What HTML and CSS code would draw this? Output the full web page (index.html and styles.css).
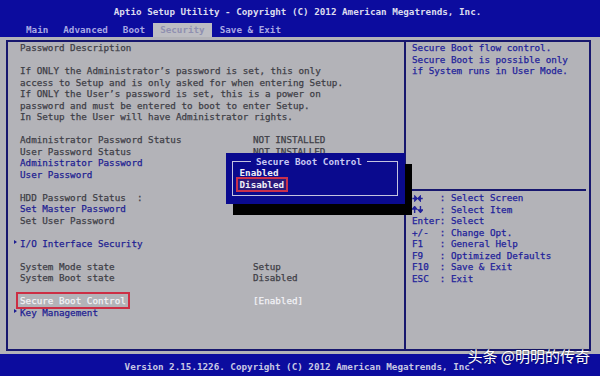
FILE: index.html
```html
<!DOCTYPE html>
<html>
<head>
<meta charset="utf-8">
<link rel="stylesheet" href="styles.css">
</head>
<body>
<div class="screen">
  <header class="top">
    <div class="title">Aptio Setup Utility - Copyright (C) 2012 American Megatrends, Inc.</div>
    <nav class="tabs">
      <span class="tab">Main</span>
      <span class="tab">Advanced</span>
      <span class="tab">Boot</span>
      <span class="tab active">Security</span>
      <span class="tab">Save &amp; Exit</span>
    </nav>
  </header>
  <main class="frame">
    <section class="left">
      <div class="row t">Password Description</div>
      <div class="row"></div>
      <div class="row t">If ONLY the Administrator’s password is set, this only</div>
      <div class="row t">access to Setup and is only asked for when entering Setup.</div>
      <div class="row t">If ONLY the User’s password is set, this is a power on</div>
      <div class="row t">password and must be entered to boot to enter Setup.</div>
      <div class="row t">In Setup the User will have Administrator rights.</div>
      <div class="row"></div>
      <div class="row kv t"><span>Administrator Password Status</span><span>NOT INSTALLED</span></div>
      <div class="row kv t"><span>User Password Status</span><span>NOT INSTALLED</span></div>
      <div class="row b">Administrator Password</div>
      <div class="row b">User Password</div>
      <div class="row"></div>
      <div class="row t">HDD Password Status  :</div>
      <div class="row b">Set Master Password</div>
      <div class="row t">Set User Password</div>
      <div class="row"></div>
      <div class="row b"><span class="mark"></span>I/O Interface Security</div>
      <div class="row"></div>
      <div class="row kv t"><span>System Mode state</span><span>Setup</span></div>
      <div class="row kv t"><span>System Boot state</span><span>Disabled</span></div>
      <div class="row"></div>
      <div class="row kv sel"><span><span class="hl">Secure Boot Control</span></span><span>[Enabled]</span></div>
      <div class="row b"><span class="mark"></span>Key Management</div>
    </section>
    <aside class="right">
      <div class="desc">
        <div class="row">Secure Boot flow control.</div>
        <div class="row">Secure Boot is possible only</div>
        <div class="row">if System runs in User Mode.</div>
      </div>
      <div class="sep"></div>
      <div class="help">
        <div class="row"><svg class="arr" viewBox="0 0 11 7" width="11.1" height="7"><path d="M0.3 3.5H4M2.8 1.2L5 3.5L2.8 5.8Z M10.7 3.5H7M8.2 1.2L6 3.5L8.2 5.8Z" stroke="#22229a" stroke-width="1.4" fill="#22229a"/></svg>   : Select Screen</div>
        <div class="row"><svg class="arr" viewBox="0 0 11 7" width="11.1" height="7"><path d="M2.6 7V2.5M0.6 3L2.6 0.6L4.6 3Z M8.4 0V4.5M6.4 4L8.4 6.4L10.4 4Z" stroke="#22229a" stroke-width="1.4" fill="#22229a"/></svg>   : Select Item</div>
        <div class="row">Enter: Select</div>
        <div class="row">+/-  : Change Opt.</div>
        <div class="row">F1   : General Help</div>
        <div class="row">F9   : Optimized Defaults</div>
        <div class="row">F10  : Save &amp; Exit</div>
        <div class="row">ESC  : Exit</div>
      </div>
    </aside>
    <div class="popup">
      <div class="inner">
        <div class="ptitle">Secure Boot Control</div>
        <div class="opt">Enabled</div>
        <div class="opt"><span class="hl2">Disabled</span></div>
      </div>
    </div>
  </main>
  <footer class="foot">Version 2.15.1226. Copyright (C) 2012 American Megatrends, Inc.</footer>
  <div class="watermark">头条 @明明的传奇</div>
</div>
</body>
</html>
```

FILE: styles.css
```css
html, body {
  margin: 0;
  padding: 0;
}
body {
  background: #b3b3b8;
  font-family: "DejaVu Sans Mono", "Liberation Mono", monospace;
  font-size: 9.25px;
  -webkit-text-stroke: 0.25px currentColor;
}
.screen {
  width: 600px;
  height: 376px;
  display: flex;
  flex-direction: column;
  position: relative;
  overflow: hidden;
}
.top {
  background: #0c0c9e;
  height: 37px;
  padding-top: 6px;
  box-sizing: border-box;
  flex: none;
}
.title {
  text-align: center;
  color: #dcdcee;
  font-weight: bold;
  line-height: 12px;
  padding-right: 5px;
  -webkit-text-stroke: 0;
}
.tabs {
  display: flex;
  margin-top: 5px;
  padding-left: 18.5px;
}
.tab {
  padding: 0 7.5px;
  line-height: 14px;
  color: #a8a8e4;
  font-weight: bold;
  white-space: pre;
  -webkit-text-stroke: 0;
}
.tab.active {
  background: #bdbdc3;
  color: #9090b0;
}
.frame {
  flex: 1;
  display: flex;
  padding: 3px 9px 3px 6px;
  position: relative;
}
.left {
  width: 400px;
  flex: none;
  border: 2px solid #17176e;
  padding-left: 12px;
  box-sizing: border-box;
}
.right {
  flex: 1;
  border: 2px solid #17176e;
  border-left: none;
  padding-left: 6px;
  color: #22229a;
}
.row {
  line-height: 11.5px;
  height: 11.5px;
  white-space: pre;
}
.kv {
  display: grid;
  grid-template-columns: 233px auto;
}
.t { color: #3e3e46; }
.b { color: #1e1e92; }
.sel { color: #f2f2f6; }
.mark {
  display: inline-block;
  width: 0;
  height: 0;
  border-left: 3px solid #1e1e92;
  border-top: 2px solid transparent;
  border-bottom: 2px solid transparent;
  margin-left: -6px;
  margin-right: 3px;
  vertical-align: 3px;
}
.hl {
  padding: 0 1px;
  margin: 0 -1px;
  outline: 2px solid #cc2e44;
  outline-offset: 1px;
}
.desc {
  height: 147px;
}
.sep {
  height: 2px;
  background: #17176e;
  margin: 0 3px 0 -2px;
}
.help {
  padding-top: 1px;
  color: #22229a;
}
.arr {
  display: inline-block;
  vertical-align: -0.5px;
}
.popup {
  position: absolute;
  left: 226px;
  top: 116px;
  width: 179px;
  height: 51px;
  background: #0a0a8e;
  box-shadow: 7px 11px 0 #000;
  box-sizing: border-box;
  padding: 8px 7px 8px 6px;
}
.inner {
  position: relative;
  height: 35px;
  box-sizing: border-box;
  border: 1px solid #c4c4e0;
  padding: 5px 0 0 6.5px;
}
.ptitle {
  position: absolute;
  left: 18px;
  top: -6px;
  padding: 0 5px;
  background: #0a0a8e;
  color: #c8c8f2;
  line-height: 11px;
  font-weight: bold;
  -webkit-text-stroke: 0;
}
.opt {
  line-height: 11.5px;
  height: 11.5px;
  color: #f0f0f6;
  font-weight: bold;
  white-space: pre;
  -webkit-text-stroke: 0;
}
.hl2 {
  padding: 0 2px;
  margin: 0 -2px;
  outline: 2px solid #c8304c;
  background: #2a1a7a;
}
.foot {
  flex: none;
  height: 22px;
  box-sizing: border-box;
  padding-top: 6px;
  line-height: 14px;
  background: #0c0c9e;
  color: #c8c8e4;
  text-align: center;
  font-weight: bold;
  -webkit-text-stroke: 0;
}
.watermark {
  position: absolute;
  right: 10px;
  bottom: 10px;
  font-family: "Noto Sans CJK SC", sans-serif;
  font-size: 15px;
  line-height: 20px;
  color: #ffffff;
  -webkit-text-stroke: 0;
  text-shadow: 0 0 2px rgba(0, 0, 0, 0.55);
}
```
